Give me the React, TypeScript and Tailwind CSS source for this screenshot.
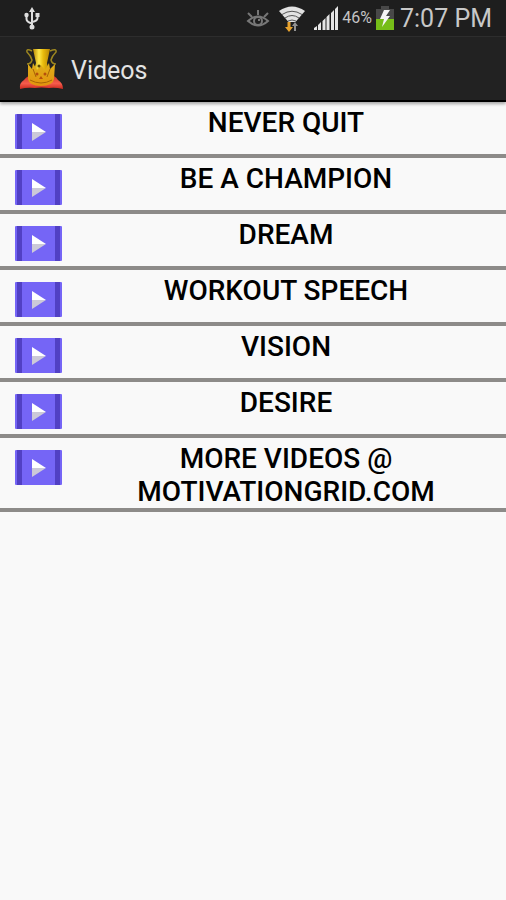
const videos = [
  'NEVER QUIT',
  'BE A CHAMPION',
  'DREAM',
  'WORKOUT SPEECH',
  'VISION',
  'DESIRE',
  'MORE VIDEOS @ MOTIVATIONGRID.COM',
];

function UsbIcon() {
  return (
    <svg className="h-6 w-4" viewBox="0 0 16 24" fill="none" stroke="#dedede" strokeWidth="2" aria-hidden="true">
      <path d="M8 4v17M2.500 9v4q0 3 5.500 4.500M13.500 8v4q0 3-5.500 4" />
      <path d="M8 1l3 5H5z" fill="#dedede" stroke="none" />
      <circle cx="8" cy="21" r="2.500" fill="#dedede" stroke="none" />
      <circle cx="2.500" cy="9" r="2.200" fill="#dedede" stroke="none" />
      <path d="M11.500 7h4v4h-4z" fill="#dedede" stroke="none" />
    </svg>
  );
}

function EyeIcon() {
  return (
    <svg className="h-5 w-6" viewBox="0 0 24 20" fill="none" stroke="#777" strokeWidth="2" aria-hidden="true">
      <path d="M2 13Q12 4 22 13Q12 22 2 13z" />
      <circle cx="12" cy="13" r="4" />
      <circle cx="13" cy="12" r="1" fill="#999" stroke="none" />
      <path d="M12 2v5M2 5l4 4M22 5l-4 4" />
    </svg>
  );
}

function WifiIcon() {
  return (
    <svg className="h-7 w-7" viewBox="0 0 28 28" fill="none" aria-hidden="true">
      <path d="M1 7Q14-2 27 7L14 22z" fill="#e2e2e2" />
      <path d="M4 10.500Q14 4 24 10.500M7 14Q14 9 21 14M10 17q4-2 8 0" stroke="#555" strokeWidth="1" />
      <path d="M7 18h13v10H7z" fill="#1e1e1e" />
      <path d="M9.500 18h3v5h2.500l-4 5-4-5h2.500z" fill="#e8a32e" />
      <path d="M16 27v-5h-2l3-4 3 4h-2v5z" fill="#929292" />
    </svg>
  );
}

function SignalIcon() {
  return (
    <svg className="h-6 w-6" viewBox="0 0 24 24" fill="#e5e5e5" aria-hidden="true">
      <path d="M0 24v-2l3-2v4zM4 24v-5l3-3v8zM8.500 24v-9l3-3v12zM12.500 24V11l3-3v16zM17 24V7l3-3v20zM21 24V3l3-3v24z" />
    </svg>
  );
}

function BatteryIcon() {
  return (
    <svg className="h-6 w-[18px]" viewBox="0 0 18 24" aria-hidden="true">
      <path d="M5 0h8v3h5v21H0V3h5z" fill="#484848" />
      <path d="M0 13h18v11H0z" fill="#76bd18" />
      <path d="M8 4L4 13h4l-2 8 8-11h-4l4-6z" fill="#f4f4f4" />
    </svg>
  );
}

function TrophyIcon() {
  return (
    <svg className="h-[42px] w-11" viewBox="0 0 44 42" aria-hidden="true">
      <defs>
        <linearGradient id="gold">
          <stop offset="0" stopColor="#b98a04" />
          <stop offset=".35" stopColor="#ffe94a" />
          <stop offset=".6" stopColor="#e9bc0c" />
          <stop offset="1" stopColor="#b88404" />
        </linearGradient>
        <linearGradient id="crown" x2="0" y2="1">
          <stop offset="0" stopColor="#dfb01a" />
          <stop offset="1" stopColor="#e3930e" />
        </linearGradient>
        <linearGradient id="cushion" x2="0" y2="1">
          <stop offset="0" stopColor="#c93527" />
          <stop offset=".6" stopColor="#f65c4c" />
          <stop offset="1" stopColor="#c9281e" />
        </linearGradient>
      </defs>
      <path d="M1 41q-1-6 4-9 4-5 9-5h16q6 0 9 5 5 3 5 9-8-2-14-1-8-1-14 0-8-1-15 1z" fill="url(#cushion)" />
      <path d="M13 3Q7 0 8 4q4 4 5 8-1 4-5 4M31 3q7-3 6 1-4 4-5 8 1 4 5 4" fill="none" stroke="#9c8620" strokeWidth="1.500" />
      <path d="M14 1h17l-3 14 2 10H14l3-10z" fill="url(#gold)" />
      <path d="M9 16l4 5 1-6 4 7 4-5 4 5 4-7 1 6 5-5-1 15q-1 7-13 7t-13-7z" fill="url(#crown)" />
      <path d="M11 32q11 6 22 0M14 21l3 8M31 21l-3 8" fill="none" stroke="#a76406" strokeWidth="1" />
      <g fill="#b5500b">
        <circle cx="18" cy="26" r="1.500" />
        <circle cx="26" cy="26" r="1.500" />
        <path d="M22 28l2 3h-4z" />
      </g>
      <circle cx="20" cy="18" r="1.500" fill="#5b4807" />
    </svg>
  );
}

function VideoIcon() {
  return (
    <svg className="mt-3 h-[35px] w-[47px] shrink-0" viewBox="0 0 47 35" aria-hidden="true">
      <rect width="47" height="35" rx="1" fill="#7565f6" />
      <path d="M2 0h5v35H2zM40 0h5v35h-5z" fill="#5140c4" />
      <path d="M17 9l14 9H17z" fill="#fff" />
      <path d="M17 18h14l-14 9z" fill="#ccc9d8" />
    </svg>
  );
}

export default function App() {
  return (
    <div className="min-h-screen bg-[#f9f9f9] font-[Roboto,sans-serif] text-black">
      <header className="border-b-2 border-black bg-[#222] text-[#e4e4e4] shadow-[0_2px_3px_#0005]">
        <div className="flex h-9 items-center justify-between bg-[#1e1e1e] pr-3.5 pl-6">
          <UsbIcon />
          <div className="flex items-center">
            <EyeIcon />
            <span className="ml-2"><WifiIcon /></span>
            <span className="ml-2"><SignalIcon /></span>
            <span className="ml-1 text-base text-[#c4c4c4]">46%</span>
            <span className="ml-1"><BatteryIcon /></span>
            <span className="ml-1.5 pt-0.5 text-[25px] text-[#c8c8c8]">7:07 PM</span>
          </div>
        </div>
        <div className="flex h-16 items-center gap-2 border-t border-[#2d2d2d] pl-[19px]">
          <TrophyIcon />
          <h1 className="pt-1 text-[25px]">Videos</h1>
        </div>
      </header>
      <ul>
        {videos.map((title) => (
          <li key={title} className="border-b-4 border-[#8d8b89]">
            <button type="button" className="flex min-h-[52px] w-full items-start pl-[15px]">
              <VideoIcon />
              <span className="flex-1 pt-1 pr-8 pl-9 text-center text-[28px] leading-[33px] font-medium">{title}</span>
            </button>
          </li>
        ))}
      </ul>
    </div>
  );
}
